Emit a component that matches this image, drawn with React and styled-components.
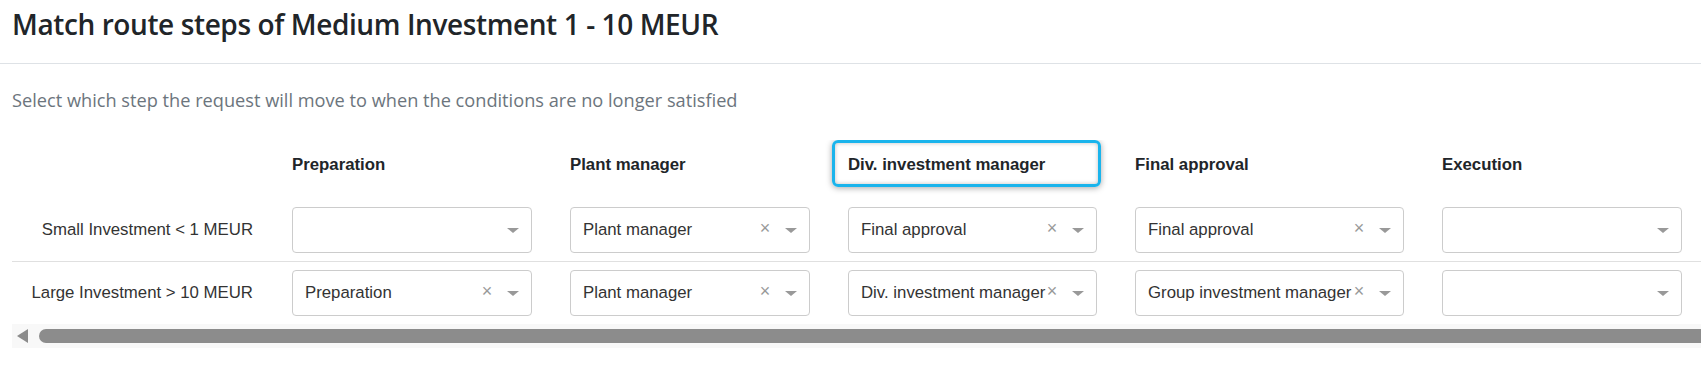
import React from 'react';
import styled, { createGlobalStyle } from 'styled-components';

const GlobalStyle = createGlobalStyle`
  html, body {
    margin: 0;
    padding: 0;
    background: #fff;
    overflow: hidden;
  }
  body {
    font-family: 'Liberation Sans', Arial, sans-serif;
    color: #212529;
  }
`;

const COLUMNS = '260px 278px 278px 287px 307px 278px 1fr';

const steps = [
  'Preparation',
  'Plant manager',
  'Div. investment manager',
  'Final approval',
  'Execution',
];

const rows = [
  {
    label: 'Small Investment < 1 MEUR',
    values: [null, 'Plant manager', 'Final approval', 'Final approval', null],
  },
  {
    label: 'Large Investment > 10 MEUR',
    values: [
      'Preparation',
      'Plant manager',
      'Div. investment manager',
      'Group investment manager',
      null,
    ],
  },
];

const Page = styled.div`
  width: 100%;
`;

const TitleBar = styled.div`
  padding: 7px 12px 22px;
  border-bottom: 1px solid #dee2e6;
`;

const Title = styled.h1`
  margin: 0;
  font-family: 'Open Sans', 'Noto Sans', sans-serif;
  font-weight: 600;
  font-size: 28px;
  letter-spacing: -0.4px;
  line-height: 34px;
  color: #212529;
`;

const Content = styled.div`
  padding-left: 12px;
`;

const Hint = styled.p`
  margin: 24px 0 28px;
  font-family: 'Open Sans', 'Noto Sans', sans-serif;
  font-size: 18.2px;
  line-height: 24px;
  color: #6c757d;
`;

// clipping frame: the table is a bit wider than the visible area
const ScrollArea = styled.div`
  width: 1780px;
  overflow: hidden;
`;

const Matrix = styled.div`
  width: 1840px;
`;

const ScrollTrack = styled.div`
  display: flex;
  align-items: center;
  height: 24px;
  background: #f8f8f8;
`;

const ScrollArrow = styled.span`
  width: 0;
  height: 0;
  margin-left: 5px;
  border-style: solid;
  border-width: 7px 11px 7px 0;
  border-color: transparent #8c8c8c transparent transparent;
`;

const ScrollThumb = styled.span`
  flex: 1;
  height: 14px;
  margin-left: 11px;
  border-radius: 7px;
  background: #8c8c8c;
`;

const Row = styled.div`
  display: grid;
  grid-template-columns: ${COLUMNS};
  ${props => (props.$divider ? 'border-bottom: 1px solid #e0e0e0;' : '')}
`;

const HeaderRow = styled(Row)`
  height: 59px;
`;

const HeaderCell = styled.div`
  position: relative;
  padding: 14px 18px 0 20px;
  font-size: 16.8px;
  font-weight: 700;
  line-height: 22px;
  color: #212529;
  white-space: nowrap;

  ${props =>
    props.$highlighted &&
    `
    &::before {
      content: '';
      position: absolute;
      top: 0;
      left: 4px;
      right: 14px;
      height: 47px;
      box-sizing: border-box;
      border: 3px solid #1ab4ec;
      border-radius: 6px;
      box-shadow: 0 1px 6px rgba(0, 0, 0, 0.35), inset 0 0 4px rgba(0, 0, 0, 0.25);
      pointer-events: none;
    }
  `}
`;

const BodyRow = styled(Row)`
  padding: 8px 0;
`;

const LabelCell = styled.div`
  display: flex;
  align-items: center;
  justify-content: flex-end;
  padding-right: 19px;
  font-size: 16.8px;
  color: #333;
  white-space: nowrap;
`;

const Cell = styled.div`
  padding: 0 18px 0 20px;
`;

const SelectBox = styled.div`
  display: flex;
  align-items: center;
  height: 46px;
  box-sizing: border-box;
  border: 1px solid #ccc;
  border-radius: 4px;
  background: #fff;
`;

const SelectValue = styled.div`
  flex: 1;
  min-width: 0;
  padding-left: 12px;
  font-size: 16.8px;
  color: #333;
  white-space: nowrap;
`;

const ClearZone = styled.span`
  width: 24px;
  text-align: center;
  font-size: 18px;
  line-height: 1;
  color: #999;
  margin-top: -4px;
`;

const ArrowZone = styled.span`
  display: flex;
  justify-content: center;
  width: 28px;
  margin-right: 4px;
`;

const Arrow = styled.span`
  width: 0;
  height: 0;
  border-style: solid;
  border-width: 5px 6px 0;
  border-color: #999 transparent transparent;
`;

const StepSelect = ({ value }) => (
  <SelectBox>
    <SelectValue>{value}</SelectValue>
    {value && <ClearZone>×</ClearZone>}
    <ArrowZone>
      <Arrow />
    </ArrowZone>
  </SelectBox>
);

export default function App() {
  return (
    <Page>
      <GlobalStyle />
      <TitleBar>
        <Title>Match route steps of Medium Investment 1 - 10 MEUR</Title>
      </TitleBar>
      <Content>
        <Hint>
          Select which step the request will move to when the conditions are no
          longer satisfied
        </Hint>
        <ScrollArea>
          <Matrix>
            <HeaderRow>
              <HeaderCell />
              {steps.map((step, i) => (
                <HeaderCell key={step} $highlighted={i === 2}>
                  {step}
                </HeaderCell>
              ))}
            </HeaderRow>
            {rows.map((row, r) => (
              <BodyRow key={row.label} $divider={r < rows.length - 1}>
                <LabelCell>{row.label}</LabelCell>
                {row.values.map((value, i) => (
                  <Cell key={i}>
                    <StepSelect value={value} />
                  </Cell>
                ))}
              </BodyRow>
            ))}
          </Matrix>
          <ScrollTrack>
            <ScrollArrow />
            <ScrollThumb />
          </ScrollTrack>
        </ScrollArea>
      </Content>
    </Page>
  );
}
